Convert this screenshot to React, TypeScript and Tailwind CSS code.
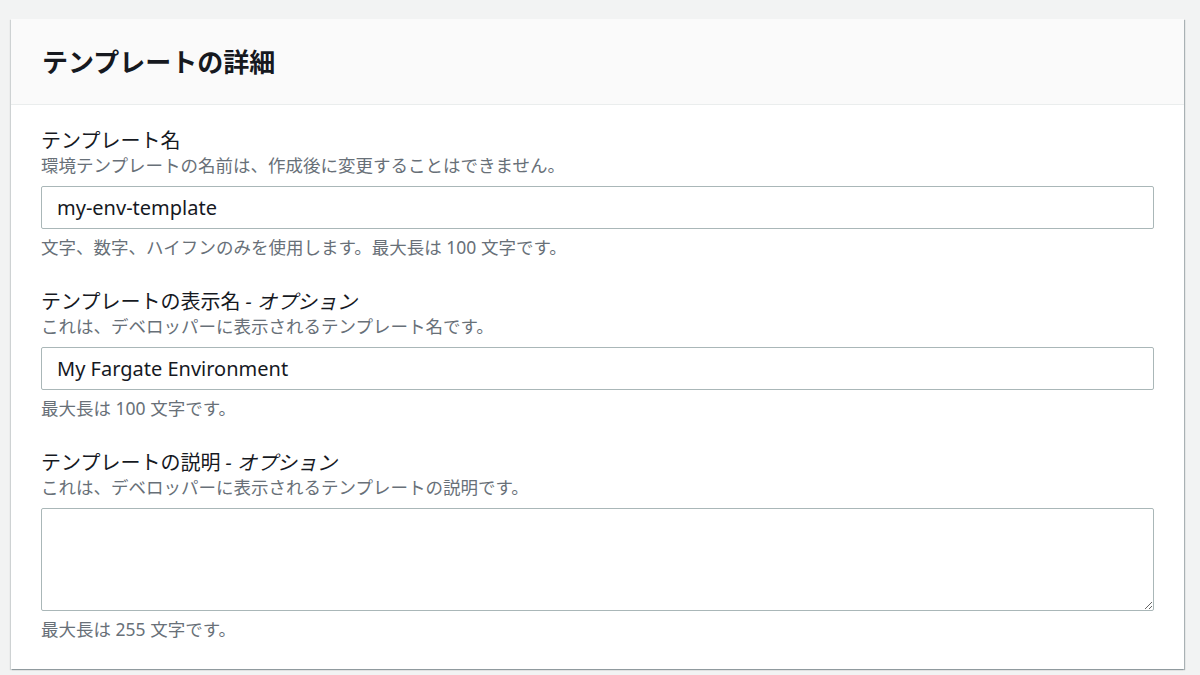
const font = "font-['Noto_Sans','Noto_Sans_CJK_JP',sans-serif]";

function Field({
  label,
  optional,
  desc,
  hint,
  value,
  multiline,
}: {
  label: string;
  optional?: boolean;
  desc: string;
  hint: string;
  value?: string;
  multiline?: boolean;
}) {
  return (
    <div className="flex flex-col">
      <div className="text-[20px] leading-[27px] text-[#16191f]">
        {label}
        {optional && <span className="italic"> - オプション</span>}
      </div>
      <div className="text-[17.5px] leading-[23px] text-[#687078]">{desc}</div>
      <div className="mt-[9px]">
        {multiline ? (
          <textarea
            readOnly
            className="block h-[103px] w-full resize-y rounded-[2px] border border-[#aab7b8] bg-white px-[15px] py-[6px] text-[18px] outline-none"
          />
        ) : (
          <div className="flex h-[43px] items-center rounded-[2px] border border-[#aab7b8] bg-white px-[15px] text-[20px] text-[#16191f]">
            {value}
          </div>
        )}
      </div>
      <div className="mt-[7px] text-[17.5px] leading-[23px] text-[#687078]">{hint}</div>
    </div>
  );
}

export default function App() {
  return (
    <div className={`${font} h-[675px] w-[1200px] overflow-hidden bg-[#f2f3f3] pl-[11px] pr-[16px] pt-[19px]`}>
      <div className="h-[650px] bg-white shadow-[1px_1px_1px_0_rgba(0,28,36,0.3),-1px_1px_1px_0_rgba(0,28,36,0.15)]">
        <div className="flex h-[86px] items-center border-b border-[#eaeded] bg-[#fafafa] px-[31px]">
          <h2 className="text-[26px] font-bold leading-none text-[#16191f]">テンプレートの詳細</h2>
        </div>
        <div className="flex flex-col gap-[29px] pl-[30px] pr-[30px] pt-[22px]">
          <Field
            label="テンプレート名"
            desc="環境テンプレートの名前は、作成後に変更することはできません。"
            value="my-env-template"
            hint="文字、数字、ハイフンのみを使用します。最大長は 100 文字です。"
          />
          <Field
            label="テンプレートの表示名"
            optional
            desc="これは、デベロッパーに表示されるテンプレート名です。"
            value="My Fargate Environment"
            hint="最大長は 100 文字です。"
          />
          <Field
            label="テンプレートの説明"
            optional
            desc="これは、デベロッパーに表示されるテンプレートの説明です。"
            multiline
            hint="最大長は 255 文字です。"
          />
        </div>
      </div>
    </div>
  );
}
